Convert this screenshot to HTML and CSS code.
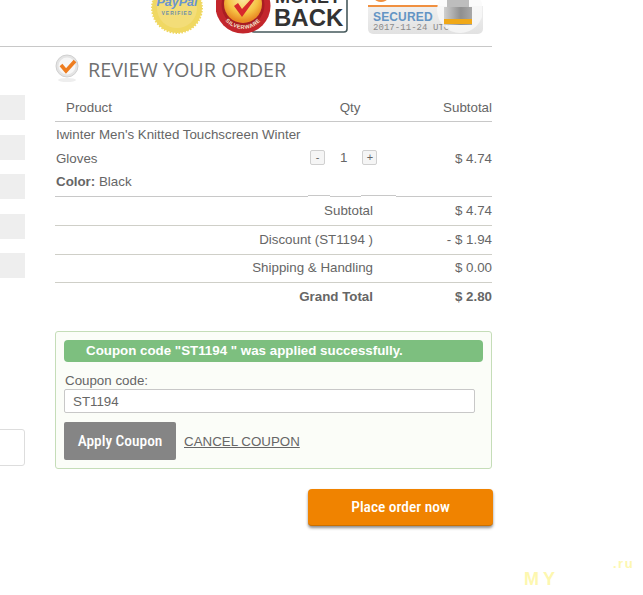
FILE: index.html
```html
<!DOCTYPE html>
<html lang="en">
<head>
  <meta charset="UTF-8">
  <title>Review your order</title>
  <link rel="stylesheet" href="styles.css">
</head>
<body>

<div class="page">
  <!-- left column, cut off by the window -->
  <div class="side">
    <div class="side-field"></div>
    <div class="side-field"></div>
    <div class="side-field"></div>
    <div class="side-field"></div>
    <div class="side-field"></div>
    <div class="side-box"></div>
  </div>

  <div class="main">
    <div class="badges">
      <div class="badge-paypal">
        <svg width="54" height="36" viewBox="0 0 54 36">
          <circle cx="27" cy="8" r="25" fill="#f0d862" stroke="#f0d862" stroke-width="2" stroke-dasharray="1.5 1.5"/>
          <circle cx="27" cy="8" r="20" fill="#f3dd78"/>
          <text x="27" y="6" text-anchor="middle" class="pp-name">PayPal</text>
          <text x="27" y="15" text-anchor="middle" class="pp-verified">VERIFIED</text>
        </svg>
      </div>
      <div class="badge-money">
        <svg width="133" height="38" viewBox="0 0 133 38">
          <defs>
            <radialGradient id="seal" cx="50%" cy="35%" r="60%">
              <stop offset="0" stop-color="#fbe9a8"/>
              <stop offset="0.65" stop-color="#f6c445"/>
              <stop offset="1" stop-color="#e98a24"/>
            </radialGradient>
            <path id="ribbon" d="M7.4 18 A23 23 0 0 0 46.6 18"/>
          </defs>
          <rect x="35" y="-12" width="96" height="44" rx="3" fill="#fff" stroke="#46595c" stroke-width="1.6"/>
          <circle cx="27" cy="6" r="27.5" fill="#c3262c"/>
          <circle cx="27" cy="5" r="21.5" fill="#a91d22"/>
          <circle cx="27" cy="4" r="19" fill="url(#seal)"/>
          <path d="M18 6 L22 3 L26 9 L37 -3 L39 -1 L26 17 Z" fill="#d8282c"/>
          <text class="seal-text"><textPath href="#ribbon" startOffset="50%" text-anchor="middle">SILVERWARE</textPath></text>
          <text x="59" y="3" class="mb-top">MONEY</text>
          <text x="58" y="26" class="mb-text">BACK</text>
        </svg>
      </div>
      <div class="badge-secured">
        <span class="secured-text">SECURED</span>
        <span class="secured-date">2017-11-24 UTC</span>
        <svg class="lock" width="50" height="34" viewBox="0 0 50 34">
          <defs>
            <linearGradient id="steel" x1="0" x2="1" y1="0" y2="0">
              <stop offset="0" stop-color="#d0d0d0"/>
              <stop offset="0.6" stop-color="#8f8f8f"/>
              <stop offset="1" stop-color="#a8a8a8"/>
            </linearGradient>
          </defs>
          <circle cx="28" cy="10" r="23" fill="#fafafa" fill-opacity="0.75"/>
          <rect x="15" y="0" width="22" height="9" fill="#bdbdbd"/>
          <rect x="12" y="7" width="28" height="18" fill="url(#steel)"/>
          <rect x="12" y="19" width="28" height="5" fill="#f0a818"/>
        </svg>
      </div>
    </div>

    <h2 class="title">
      <svg width="26" height="30" viewBox="0 0 26 30">
        <ellipse cx="12" cy="26" rx="9" ry="2" fill="#eeeeee"/>
        <circle cx="12" cy="12" r="11" fill="#e4e4e4" stroke="#d0d0d0"/>
        <circle cx="12" cy="12" r="8.5" fill="#f7f7f7"/>
        <path d="M6 11 L11 17 L20 7" fill="none" stroke="#ee7d1f" stroke-width="3.6"/>
      </svg>
      REVIEW YOUR ORDER
    </h2>

    <div class="cart-head">
      <span class="col-name head-name">Product</span>
      <span class="col-qty">Qty</span>
      <span class="col-price">Subtotal</span>
    </div>

    <div class="cart-row">
      <div class="col-name">
        <div>Iwinter Men's Knitted Touchscreen Winter</div>
        <div>Gloves</div>
        <div><b>Color:</b> Black</div>
      </div>
      <div class="col-qty qty">
        <span class="qty-btn">-</span>
        <span>1</span>
        <span class="qty-btn">+</span>
      </div>
      <div class="col-price">$ 4.74</div>
      <span class="bump bump-one"></span>
      <span class="bump bump-two"></span>
    </div>

    <div class="total-row">
      <span class="total-label">Subtotal</span>
      <span class="total-value">$ 4.74</span>
    </div>
    <div class="total-row">
      <span class="total-label">Discount (ST1194 )</span>
      <span class="total-value">- $ 1.94</span>
    </div>
    <div class="total-row short">
      <span class="total-label">Shipping &amp; Handling</span>
      <span class="total-value">$ 0.00</span>
    </div>
    <div class="total-row short grand">
      <span class="total-label">Grand Total</span>
      <span class="total-value">$ 2.80</span>
    </div>

    <div class="coupon">
      <div class="coupon-msg">Coupon code "ST1194 " was applied successfully.</div>
      <label class="coupon-label" for="code">Coupon code:</label>
      <input class="coupon-input" id="code" value="ST1194">
      <div class="coupon-actions">
        <button class="apply-btn">Apply Coupon</button>
        <a class="cancel-link" href="#">CANCEL COUPON</a>
      </div>
    </div>

    <div class="place">
      <button class="place-btn">Place order now</button>
    </div>
  </div>

  <div class="watermark">
    <span class="wm-ru">.ru</span>
    <span class="wm-my">MY</span>
  </div>
</div>

</body>
</html>
```

FILE: styles.css
```css
body {
  font-family: "Liberation Sans", Arial, sans-serif;
  margin: 0;
  padding: 0;
  background: #ffffff;
  color: #666666;
  font-size: 13.33px;
  overflow: hidden;
}
.page {
  display: flex;
  height: 595px;
  overflow: hidden;
}

/* left column */
.side {
  width: 25px;
  padding-top: 95px;
  margin-right: 30px;
  flex-shrink: 0;
}
.side-field {
  height: 25px;
  margin-bottom: 14.5px;
  background: #eeeeee;
}
.side-box {
  height: 37px;
  margin-top: 151px;
  margin-left: -5px;
  box-sizing: border-box;
  border: 1px solid #dddddd;
  border-radius: 3px;
}

/* main column */
.main {
  width: 437px;
  flex-shrink: 0;
}
.badges {
  height: 47px;
  margin-left: -55px;
  width: 492px;
  box-sizing: border-box;
  border-bottom: 1px solid #c8c8c8;
  display: flex;
  padding-left: 150px;
  overflow: hidden;
}
.badge-paypal { width: 66px; }
.badge-money { width: 152px; }
.badge-secured {
  position: relative;
  width: 115px;
  height: 34px;
  display: flex;
  flex-direction: column;
  box-sizing: border-box;
  padding: 11px 0 0 5px;
  background: linear-gradient(#ffffff 6px, #efefef 6px, #e2e2e2);
  border-radius: 0 0 5px 5px;
  overflow: hidden;
}
.badge-secured::before {
  content: "";
  position: absolute;
  left: 0;
  top: 5px;
  width: 70px;
  height: 2px;
  background: #f09040;
}
.badge-secured::after {
  content: "";
  position: absolute;
  left: 7px;
  top: -4px;
  width: 12px;
  height: 6px;
  border-radius: 50%;
  background: #f09040;
}
.pp-name { font: italic bold 12.5px "Liberation Sans", sans-serif; fill: #6a95cf; }
.pp-verified { font: bold 5px "Liberation Sans", sans-serif; fill: #6f8fa8; letter-spacing: 1px; }
.seal-text { font: bold 5.5px "Liberation Sans", sans-serif; fill: #f4e6d0; letter-spacing: 0.4px; }
.mb-text { font: bold 24px "Liberation Sans", sans-serif; fill: #333333; }
.mb-top { font: bold 18px "Liberation Sans", sans-serif; fill: #333333; }
.secured-text {
  font-size: 12px;
  font-weight: bold;
  line-height: 12px;
  letter-spacing: 0.15px;
  color: #6394c4;
}
.secured-date {
  margin-top: 0;
  font-family: "Liberation Mono", monospace;
  font-size: 9px;
  line-height: 10px;
  letter-spacing: 0.05px;
  color: #8a8a8a;
}
.lock {
  position: absolute;
  left: 64px;
  top: 0;
}

.title {
  display: flex;
  align-items: center;
  gap: 7px;
  height: 44px;
  margin: 0 0 2px;
  font-size: 19.8px;
  font-weight: normal;
  font-family: "Open Sans", sans-serif;
  color: #707070;
}

.cart-head, .cart-row {
  display: flex;
  box-sizing: border-box;
  border-bottom: 1px solid #c8c8c8;
}
.cart-head {
  height: 29px;
  align-items: center;
}
.head-name { padding-left: 11px; box-sizing: border-box; }
.cart-row {
  position: relative;
  height: 75px;
  line-height: 23.5px;
}
.cart-row .col-name { padding: 1px 0 0 1px; box-sizing: border-box; }
.col-name { width: 253px; }
.col-qty { width: 84px; text-align: center; }
.col-price { width: 100px; text-align: right; }
.cart-row .col-price { margin-top: 25px; }
.qty {
  display: flex;
  justify-content: flex-start;
  align-items: center;
  gap: 15px;
  height: 23px;
  margin-top: 24px;
  padding-left: 2px;
  box-sizing: border-box;
  font-size: 13.33px;
}
.qty-btn {
  width: 15px;
  height: 15px;
  line-height: 12px;
  text-align: center;
  font-size: 11px;
  background: #f5f5f5;
  border: 1px solid #d0d0d0;
  border-radius: 2px;
  box-sizing: border-box;
}
/* table border steps up a pixel under the qty cell */
.bump {
  position: absolute;
  bottom: -1px;
  height: 1px;
  background: #ffffff;
  border-top: 1px solid #c8c8c8;
}
.bump-one { left: 253px; width: 22px; }
.bump-two { left: 306px; width: 35px; }

.total-row {
  display: flex;
  height: 29px;
  padding-bottom: 2px;
  align-items: center;
  box-sizing: border-box;
  border-bottom: 1px solid #cfcfc8;
}
.short { height: 28px; }
.total-label {
  width: 318px;
  text-align: right;
}
.total-value {
  width: 119px;
  text-align: right;
}
.grand {
  border-bottom: none;
  font-weight: bold;
}

.coupon {
  margin-top: 20px;
  height: 138px;
  box-sizing: border-box;
  padding: 8px;
  background: #fbfdf8;
  border: 1px solid #c5ddb8;
  border-radius: 3px;
}
.coupon-msg {
  height: 22px;
  line-height: 21px;
  padding-left: 22px;
  background: #7dbf7f;
  border-radius: 4px;
  color: #ffffff;
  font-weight: bold;
}
.coupon-label {
  display: block;
  margin-top: 11px;
  padding-left: 1px;
  line-height: 15px;
}
.coupon-input {
  display: block;
  width: 411px;
  height: 24px;
  margin-top: 1px;
  box-sizing: border-box;
  padding: 0 8px;
  border: 1px solid #c8c8c8;
  border-radius: 2px;
  background: #ffffff;
  color: #666666;
  font-family: inherit;
  font-size: 13.33px;
}
.coupon-actions {
  display: flex;
  align-items: center;
  gap: 8px;
  margin-top: 9px;
}
.apply-btn {
  width: 112px;
  height: 38px;
  border: none;
  border-radius: 2px;
  background: #858585;
  color: #ffffff;
  font-family: Roboto, sans-serif;
  font-size: 15.4px;
  font-stretch: condensed;
  font-weight: 500;
  padding: 0;
}
.cancel-link {
  color: #666666;
  font-size: 13.33px;
}

.place {
  display: flex;
  justify-content: flex-end;
  margin-top: 20px;
  margin-right: -1px;
}
.place-btn {
  width: 185px;
  height: 37px;
  border: none;
  border-bottom: 1px solid #c96f00;
  border-radius: 4px;
  background: #f08300;
  color: #ffffff;
  box-shadow: 0 2px 3px rgba(0, 0, 0, 0.45);
  font-family: Roboto, sans-serif;
  font-size: 15.4px;
  font-stretch: condensed;
  font-weight: 500;
  padding: 0;
}

/* faint site watermark over the corner */
.watermark {
  position: absolute;
  left: 520px;
  top: 555px;
  width: 120px;
  height: 36px;
  color: #fdf7b0;
  font-weight: bold;
}
.wm-my {
  position: absolute;
  left: 4px;
  top: 14px;
  font-size: 18px;
  line-height: 20px;
  letter-spacing: 4px;
}
.wm-ru {
  position: absolute;
  left: 93px;
  top: 1px;
  font-size: 13px;
  letter-spacing: 1.5px;
}
```
